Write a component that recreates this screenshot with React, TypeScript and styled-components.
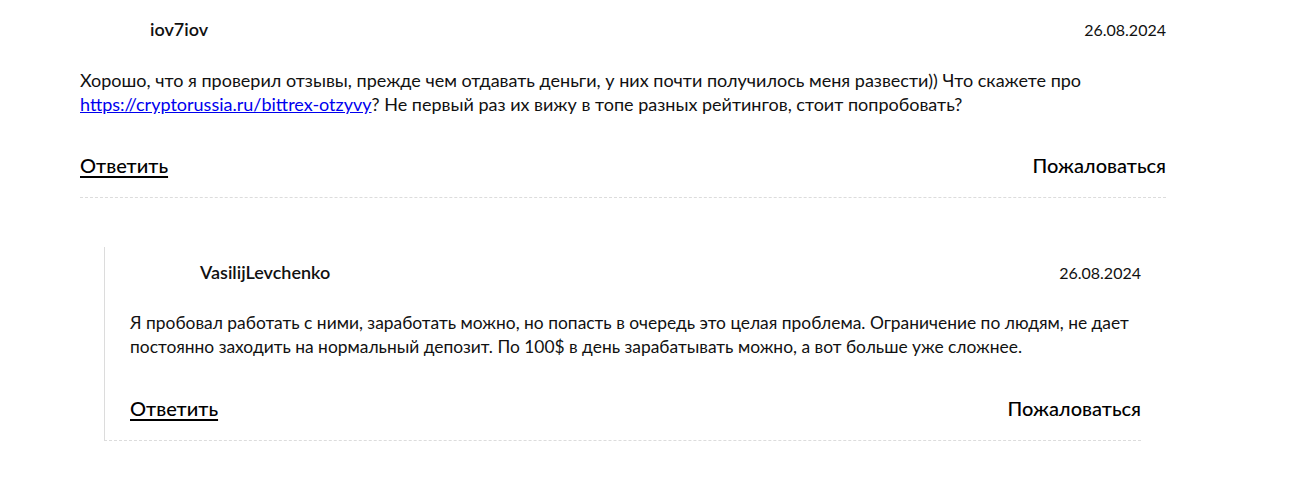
import styled, { createGlobalStyle } from 'styled-components';

const GlobalStyle = createGlobalStyle`
  body {
    margin: 0;
    background: #fff;
    font-family: Lato, 'Open Sans', sans-serif;
    color: #111;
  }
`;

const Page = styled.div`
  width: 1086px;
  margin-left: 80px;
  padding-top: 4px;
`;

const Header = styled.div`
  display: flex;
  align-items: center;
  justify-content: space-between;
  height: 40px;
`;

const Author = styled.div`
  display: flex;
  align-items: center;
  gap: 20px;
  font-size: 18px;
  font-weight: 600;
`;

// avatar slot, empty in the screenshot
const Avatar = styled.div`
  width: 50px;
  height: 40px;
`;

const DateText = styled.div`
  font-size: 16px;
`;

const Body = styled.p`
  margin: 19px 0 0;
  font-size: 18px;
  line-height: 24px;

  a {
    color: #0000ee;
  }
`;

const CommentBox = styled.div<{ nested?: boolean }>`
  border-bottom: 1px dashed #dcdcdc;
  ${(props) =>
    props.nested
      ? `
    margin: 49px 25px 0 24px;
    border-left: 1px solid #dcdcdc;
    padding: 5px 0 20px 25px;
  `
      : `
    padding: 5px 0 20px 0;
  `}

  ${Body} {
    font-size: ${(props) => (props.nested ? '17.4px' : '18px')};
  }
`;

const Actions = styled.div`
  display: flex;
  justify-content: space-between;
  margin-top: 37px;
  font-size: 20px;
  line-height: 24px;
  font-weight: 500;
  color: #000;
`;

const Reply = styled.a`
  color: #000;
  text-decoration: underline;
  text-decoration-thickness: 2px;
  text-underline-offset: 3px;
  cursor: pointer;
`;

const Report = styled.span`
  cursor: pointer;
`;

type CommentProps = {
  author: string;
  date: string;
  nested?: boolean;
  children: React.ReactNode;
};

const Comment = ({ author, date, nested, children }: CommentProps) => (
  <CommentBox nested={nested}>
    <Header>
      <Author>
        <Avatar />
        {author}
      </Author>
      <DateText>{date}</DateText>
    </Header>
    <Body>{children}</Body>
    <Actions>
      <Reply>Ответить</Reply>
      <Report>Пожаловаться</Report>
    </Actions>
  </CommentBox>
);

const App = () => (
  <>
    <GlobalStyle />
    <Page>
      <Comment author='iov7iov' date='26.08.2024'>
        Хорошо, что я проверил отзывы, прежде чем отдавать деньги, у них почти
        получилось меня развести)) Что скажете про{' '}
        <a href='#'>https://cryptorussia.ru/bittrex-otzyvy</a>? Не первый раз
        их вижу в топе разных рейтингов, стоит попробовать?
      </Comment>
      <Comment author='VasilijLevchenko' date='26.08.2024' nested>
        Я пробовал работать с ними, заработать можно, но попасть в очередь это
        целая проблема. Ограничение по людям, не дает постоянно заходить на
        нормальный депозит. По 100$ в день зарабатывать можно, а вот больше уже
        сложнее.
      </Comment>
    </Page>
  </>
);

export default App;
